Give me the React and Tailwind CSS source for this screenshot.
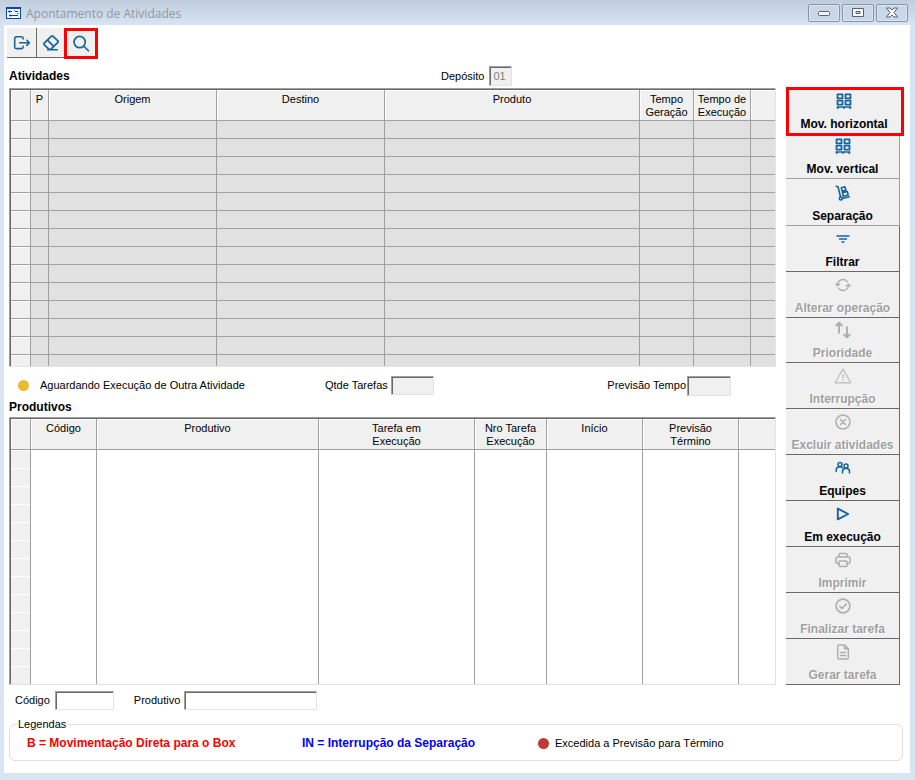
import clsx from 'clsx';

const sunken = 'border border-t-[#a0a0a0] border-l-[#a0a0a0] border-r-[#e3e3e3] border-b-[#e3e3e3] shadow-[inset_1px_1px_0_#696969]';

const Svg = ({ size = 16, children, ...props }) => (
    <svg
        width={size}
        height={size}
        viewBox="0 0 16 16"
        fill="none"
        stroke="currentColor"
        strokeWidth="1.4"
        strokeLinecap="round"
        strokeLinejoin="round"
        aria-hidden="true"
        {...props}
    >
        {children}
    </svg>
);

const AppLogo = () => (
    <svg width="15" height="12" viewBox="0 0 15 12" aria-hidden="true">
        <rect width="15" height="12" fill="#0a46a8" />
        <rect x="1" y="2" width="13" height="9" fill="#f4f8fd" />
        <path d="M2 4.500h4M3.500 3.500v2M9 4.500h3M3 8.500h9M4.500 7.500v2" stroke="#0a3f9c" strokeWidth="1" />
        <path d="M8 3.500h1M11 6.500h2" stroke="#4b86d8" />
    </svg>
);

const ExitIcon = () => (
    <Svg size={18} strokeWidth="1.4">
        <path d="M9 4.500V4a1.500 1.500 0 0 0-1.500-1.500H3A1.500 1.500 0 0 0 1.500 4v7.500A1.500 1.500 0 0 0 3 13h4.500A1.500 1.500 0 0 0 9 11.500V11M6 7.800h8.500M12.300 5.500l2.300 2.300-2.300 2.300" />
    </Svg>
);

const EraserIcon = () => (
    <Svg size={18} strokeWidth="1.5">
        <path d="M5 14h8.500M6.200 13.700 1.900 9.500a.9.900 0 0 1 0-1.300l6.500-6.300a.9.900 0 0 1 1.300 0l4.400 4.300a.9.900 0 0 1 0 1.300l-6.300 6.200zM4.800 5.500l5.600 5.500" />
    </Svg>
);

const SearchIcon = () => (
    <Svg size={18} strokeWidth="1.5">
        <circle cx="6.800" cy="6.300" r="5" />
        <path d="m10.600 10 4 4" />
    </Svg>
);

const PalletIcon = () => (
    <Svg strokeWidth="1.800" strokeLinejoin="round" strokeLinecap="butt">
        <rect x="1.500" y="1.400" width="5" height="4" />
        <rect x="9.500" y="1.400" width="5" height="4" />
        <rect x="1.500" y="7.600" width="5" height="4" />
        <rect x="9.500" y="7.600" width="5" height="4" />
        <path d="M0.500 14h15M1.800 14v2M8 14v2M14.200 14v2" strokeWidth="1.500" />
    </Svg>
);

const HandTruckIcon = () => (
    <Svg strokeWidth="1.6">
        <path d="M1.200 1.200 3 1.700l2.500 10M7.500 13.500l6.800-1.700" />
        <circle cx="5.800" cy="13.500" r="1.500" />
        <path d="m6.300 2.700 3.700-1 .9 3.500-3.700 1zM7.400 7.700l4.900-1.200.9 3.400-4.900 1.300z" />
    </Svg>
);

const FilterIcon = () => (
    <Svg strokeWidth="1.500" strokeLinecap="butt">
        <path d="M1.500 5h13M4 8h8M6.500 11h3" />
    </Svg>
);

const RefreshIcon = () => (
    <Svg strokeWidth="1.300">
        <path d="M2.600 8.500a5.400 5.400 0 0 1 9.800-3.600M13.400 7.500a5.400 5.400 0 0 1-9.800 3.600M0.800 7l1.800 1.800L4.600 7M11.400 9l2-1.800L15.200 9" />
    </Svg>
);

const PriorityIcon = () => (
    <Svg size={18} strokeWidth="1.700">
        <path d="M4.500 10.500V1.500M2 4l2.500-2.500L7 4M11.500 5.500v9M9 12l2.500 2.500L14 12" />
    </Svg>
);

const WarningIcon = () => (
    <Svg size={18} strokeWidth="1.200" opacity="0.7">
        <path d="M8 1.800 15 14H1zM8 6.500v3.300M8 11.700v.2" />
    </Svg>
);

const CancelIcon = () => (
    <Svg strokeWidth="1.500">
        <circle cx="8" cy="8" r="7" />
        <path d="m5.500 5.500 5 5M10.500 5.500l-5 5" />
    </Svg>
);

const TeamIcon = () => (
    <Svg strokeWidth="1.500">
        <circle cx="5" cy="4.500" r="2" />
        <circle cx="11" cy="6" r="2" />
        <path d="M1.200 11.500V10a3 3 0 0 1 3-3h1.300c1 0 1.500.3 2 .8M7.500 13v-1.500a3 3 0 0 1 3-3h1a3 3 0 0 1 3 3V13" />
    </Svg>
);

const PlayIcon = () => (
    <Svg strokeWidth="1.900">
        <path d="M2.800 2.600v10.800L13.200 8z" />
    </Svg>
);

const PrinterIcon = () => (
    <Svg strokeWidth="1.500">
        <path d="M4 5V2.500A1 1 0 0 1 5 1.500h6a1 1 0 0 1 1 1V5M4 11.500H2.500a1.500 1.500 0 0 1-1.500-1.500V6.500A1.500 1.500 0 0 1 2.500 5h11A1.500 1.500 0 0 1 15 6.500V10a1.500 1.500 0 0 1-1.500 1.500H12" />
        <rect x="4" y="9" width="8" height="5.500" rx="1" />
    </Svg>
);

const CheckIcon = () => (
    <Svg strokeWidth="1.600">
        <circle cx="8" cy="8" r="6.900" />
        <path d="m4.800 8.300 2.200 2.200 4.200-4.500" />
    </Svg>
);

const DocumentIcon = () => (
    <Svg strokeWidth="1.500">
        <path d="M9.500 1H4a1.300 1.300 0 0 0-1.300 1.300v11.400A1.300 1.300 0 0 0 4 15h8a1.300 1.300 0 0 0 1.300-1.300V4.800zM9.500 1v3.800h3.800M5.500 8.500h5M5.500 11.500h5" />
    </Svg>
);

const actions = [
    { label: 'Mov. vertical', Icon: PalletIcon, height: 'h-[43px]', border: 'border-[#a0a0a0]' },
    { label: 'Separação', Icon: HandTruckIcon, height: 'h-[47px]', border: 'border-[#a0a0a0]' },
    { label: 'Filtrar', Icon: FilterIcon },
    { label: 'Alterar operação', Icon: RefreshIcon, disabled: true },
    { label: 'Prioridade', Icon: PriorityIcon, disabled: true, height: 'h-[45px]' },
    { label: 'Interrupção', Icon: WarningIcon, disabled: true },
    { label: 'Excluir atividades', Icon: CancelIcon, disabled: true },
    { label: 'Equipes', Icon: TeamIcon },
    { label: 'Em execução', Icon: PlayIcon },
    { label: 'Imprimir', Icon: PrinterIcon, disabled: true },
    { label: 'Finalizar tarefa', Icon: CheckIcon, disabled: true },
    { label: 'Gerar tarefa', Icon: DocumentIcon, disabled: true },
];

const ActionButton = ({ label, Icon, disabled, height = 'h-[46px]', border = 'border-[#696969]' }) => (
    <button
        type="button"
        disabled={disabled}
        className={clsx(
            'mr-1 flex flex-col items-center justify-end gap-[9px] pb-[2px] bg-[#f0f0f0] border-r border-b text-[12px] leading-[13px] font-bold whitespace-nowrap',
            height,
            border,
            disabled ? 'text-[#a0a0a0] [text-shadow:1px_1px_0_#fff]' : 'text-black',
        )}
    >
        <span className={clsx('flex h-4 items-center', disabled ? 'text-[#adadad]' : 'text-[#15649b]')}>
            <Icon />
        </span>
        {label}
    </button>
);

const WindowButton = ({ label, children }) => (
    <button
        type="button"
        aria-label={label}
        className="flex h-[18px] w-8 items-center justify-center rounded-xs border border-[#8795a8] bg-[#c9d7e7] shadow-[inset_0_0_0_1px_#dbe6f2]"
    >
        <svg width="12" height="11" viewBox="0 0 12 11" fill="#f8f8f8" stroke="#5b6070" aria-hidden="true">
            {children}
        </svg>
    </button>
);

const TitleBar = () => (
    <header className="flex h-[25px] items-center bg-linear-to-b from-[#bfcddd] to-[#d7e4f2] pr-[7px] pl-[6px]">
        <AppLogo />
        <h1 className="ml-[5px] flex-1 pt-px font-['Open_Sans',sans-serif] text-[12px] text-[#8f979f]">Apontamento de Atividades</h1>
        <div className="flex gap-[2px]">
            <WindowButton label="Minimizar">
                <rect x="0.500" y="4.500" width="11" height="4" rx="1" />
            </WindowButton>
            <WindowButton label="Maximizar">
                <path d="M0.500 1.500h11v8H0.500zM4 4.500v2h4v-2z" fillRule="evenodd" />
            </WindowButton>
            <WindowButton label="Fechar">
                <path d="M0.500 1h3.500l2 2 2-2h3.500L8 5.500 11.500 10H8L6 8l-2 2H0.500L4 5.500z" />
            </WindowButton>
        </div>
    </header>
);

const ToolButton = ({ label, children, className }) => (
    <button
        type="button"
        aria-label={label}
        className={clsx('flex items-center justify-center bg-[#f0f0f0] text-[#15649b]', className)}
    >
        {children}
    </button>
);

const activityColumns = [
    { label: '', width: 'w-5' },
    { label: 'P', width: 'w-[18px]' },
    { label: 'Origem', width: 'w-[168px]' },
    { label: 'Destino', width: 'w-[168px]' },
    { label: 'Produto' },
    { label: 'Tempo Geração', width: 'w-[54px]' },
    { label: 'Tempo de Execução', width: 'w-[57px]' },
    { label: '', width: 'w-6' },
];

const workerColumns = [
    { label: '', width: 'w-5' },
    { label: 'Código', width: 'w-[66px]' },
    { label: 'Produtivo' },
    { label: 'Tarefa em Execução', width: 'w-[156px]', pad: 'px-10' },
    { label: 'Nro Tarefa Execução', width: 'w-[72px]' },
    { label: 'Início', width: 'w-24' },
    { label: 'Previsão Término', width: 'w-24', pad: 'px-5' },
    { label: '', width: 'w-9' },
];

const Grid = ({ label, columns, rows, filled }) => (
    <div className="overflow-hidden border border-t-[#a0a0a0] border-l-[#a0a0a0] border-r-[#e3e3e3] border-b-[#e3e3e3]">
        <table aria-label={label} className="w-full table-fixed border-separate border-spacing-0 border-t border-l border-[#696969]">
            <thead>
                <tr>
                    {columns.map((col, i) => (
                        <th
                            key={i}
                            className={clsx(
                                'h-[31px] border-b border-[#a0a0a0] bg-[#f0f0f0] pt-[3px] align-top font-normal leading-[13px] shadow-[inset_1px_1px_0_#fff]',
                                i < columns.length - 1 && 'border-r',
                                col.width,
                                col.pad,
                            )}
                        >
                            {col.label}
                        </th>
                    ))}
                </tr>
            </thead>
            <tbody>
                {Array.from({ length: rows }, (_, r) => (
                    <tr key={r}>
                        {columns.map((_, i) => (
                            <td
                                key={i}
                                className={clsx(
                                    'border-[#a0a0a0] p-0',
                                    filled && r === rows - 1 ? 'h-[11px]' : 'h-[18px]',
                                    i < columns.length - 1 && 'border-r',
                                    filled && r < rows - 1 && 'border-b',
                                    i === 0 && 'bg-[#f0f0f0] shadow-[inset_0_1px_0_#fff]',
                                    i > 0 && filled && 'bg-[#e1e1e1]',
                                )}
                            />
                        ))}
                    </tr>
                ))}
            </tbody>
        </table>
    </div>
);

const Field = ({ id, label, gap = 'gap-1', className, ...props }) => (
    <div className={clsx('flex items-center', gap)}>
        <label htmlFor={id}>{label}</label>
        <input id={id} className={clsx('px-[3px]', sunken, className)} {...props} />
    </div>
);

const Legend = () => (
    <fieldset className="mt-2 mr-px h-[43px] rounded-md border border-[#dfdfdf] pl-[17px]">
        <legend className="-ml-[10px] px-[1px] leading-[12px]">Legendas</legend>
        <div className="flex h-[26px] items-center leading-[13px]">
            <strong className="w-[275px] text-[12px] text-[#ff0000]">B = Movimentação Direta para o Box</strong>
            <strong className="w-[236px] text-[12px] text-[#0000ff]">IN = Interrupção da Separação</strong>
            <span className="flex items-center gap-[6px]">
                <span className="size-[11px] rounded-full bg-[#be3a34]" />
                Excedida a Previsão para Término
            </span>
        </div>
    </fieldset>
);

export default function App() {
    return (
        <div className="bg-[#d7e4f2] pb-[7px] font-['Liberation_Sans',Arial,sans-serif] text-[11px] leading-[13px] text-black">
            <TitleBar />
            <main className="mr-[5px] ml-1 bg-white pt-[3px] pr-[6px] pb-3 pl-[5px]">
                <div className="-ml-[2px] flex h-[31px]">
                    <ToolButton label="Sair" className="h-[30px] w-[30px] border-r border-b border-[#696969]">
                        <ExitIcon />
                    </ToolButton>
                    <ToolButton label="Limpar" className="h-[30px] w-[27px] border-b border-[#696969]">
                        <EraserIcon />
                    </ToolButton>
                    <ToolButton label="Pesquisar" className="h-[31px] w-[34px] border-[3px] border-[#ff0000]">
                        <SearchIcon />
                    </ToolButton>
                </div>

                <div className="flex items-start gap-[10px]">
                    <div className="min-w-0 flex-1">
                        <div className="flex h-[29px] items-end pb-[2px]">
                            <h2 className="w-[432px] pb-[3px] text-[12px] font-bold">Atividades</h2>
                            <Field id="deposito" label="Depósito" disabled defaultValue="01" gap="gap-[5px]" className="h-5 w-[23px] bg-[#f0f0f0] text-[#808080]" />
                        </div>
                        <Grid label="Atividades" columns={activityColumns} rows={14} filled />

                        <div className="flex h-[34px] items-center pt-[3px] pr-[45px] pl-[9px]">
                            <span className="flex w-[307px] items-center gap-[11px]">
                                <span className="size-[11px] rounded-full bg-[#edb92e]" />
                                Aguardando Execução de Outra Atividade
                            </span>
                            <Field id="qtde" label="Qtde Tarefas" readOnly gap="gap-[3px]" className="h-[19px] w-[43px] bg-[#f0f0f0]" />
                            <span className="flex-1" />
                            <Field id="previsao" label="Previsão Tempo" readOnly gap="gap-px" className="h-5 w-11 bg-[#f0f0f0]" />
                        </div>

                        <h2 className="h-4 text-[12px] font-bold">Produtivos</h2>
                        <Grid label="Produtivos" columns={workerColumns} rows={13} />
                    </div>

                    <nav aria-label="Ações" className="mt-[28px] flex w-[118px] flex-col">
                        <button
                            type="button"
                            className="flex h-[49px] flex-col items-center justify-end gap-[9px] border-[3px] border-[#ff0000] bg-[#f0f0f0] pr-[2px] pb-[2px] text-[12px] leading-[13px] font-bold"
                        >
                            <span className="flex h-4 items-center text-[#15649b]">
                                <PalletIcon />
                            </span>
                            Mov. horizontal
                        </button>
                        {actions.map((action) => (
                            <ActionButton key={action.label} {...action} />
                        ))}
                    </nav>
                </div>

                <div className="mt-[6px] flex gap-5 pl-[6px]">
                    <Field id="codigo" label="Código" gap="gap-[5px]" className="h-[19px] w-[59px]" />
                    <Field id="produtivo" label="Produtivo" className="h-[19px] w-[133px]" />
                </div>
                <Legend />
            </main>
        </div>
    );
}
